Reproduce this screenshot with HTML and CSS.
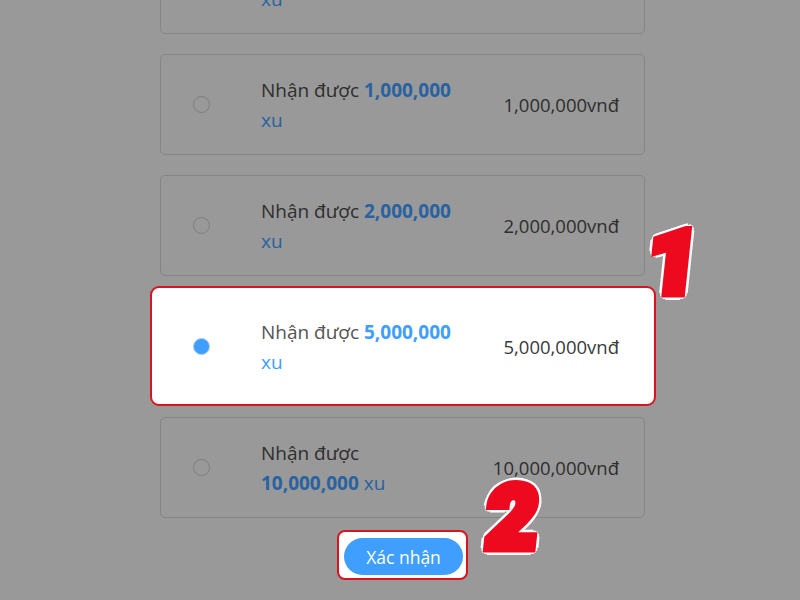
FILE: index.html
```html
<!DOCTYPE html>
<html lang="vi">
<head>
<meta charset="utf-8">
<title>Nạp xu</title>
<link rel="stylesheet" href="styles.css">
</head>
<body>
<div class="page">
  <ul class="list">
    <li class="card">
      <span class="radio"></span>
      <div class="label">Nhận được <b class="amt">500,000</b> <span class="unit">xu</span></div>
      <div class="price">500,000vnđ</div>
    </li>
    <li class="card">
      <span class="radio"></span>
      <div class="label">Nhận được <b class="amt">1,000,000</b> <span class="unit">xu</span></div>
      <div class="price">1,000,000vnđ</div>
    </li>
    <li class="card">
      <span class="radio"></span>
      <div class="label">Nhận được <b class="amt">2,000,000</b> <span class="unit">xu</span></div>
      <div class="price">2,000,000vnđ</div>
    </li>
    <li class="card card-active">
      <span class="radio radio-on"></span>
      <div class="label">Nhận được <b class="amt">5,000,000</b> <span class="unit">xu</span></div>
      <div class="price">5,000,000vnđ</div>
      <span class="mark mark-1">1</span>
    </li>
    <li class="card">
      <span class="radio"></span>
      <div class="label">Nhận được <b class="amt">10,000,000</b> <span class="unit">xu</span></div>
      <div class="price">10,000,000vnđ</div>
    </li>
  </ul>
  <div class="actions">
    <span class="highlight">
      <button class="confirm" type="button">Xác nhận</button>
    </span>
    <span class="mark mark-2">2</span>
  </div>
</div>
</body>
</html>
```

FILE: styles.css
```css
html, body {
  margin: 0;
  padding: 0;
}
body {
  background: #999999;
  font-family: "Open Sans", "Noto Sans", sans-serif;
  width: 800px;
  height: 600px;
  overflow: hidden;
}
.page {
  width: 485px;
  margin-left: 160px;
}
.list {
  list-style: none;
  margin: -67px 0 0 0;
  padding: 0;
  display: flex;
  flex-direction: column;
  gap: 20px;
}
.card {
  position: relative;
  box-sizing: border-box;
  height: 101px;
  border: 1px solid #858585;
  border-radius: 5px;
  display: flex;
  align-items: center;
  padding: 0 25px 0 32px;
}
.radio {
  box-sizing: border-box;
  width: 17px;
  height: 17px;
  border-radius: 50%;
  border: 1px solid #7d7d7d;
  flex: none;
}
.label {
  width: 198px;
  margin-left: 51px;
  font-size: 19px;
  line-height: 30px;
  color: #2e2e2e;
}
.amt {
  color: #2862a0;
  font-weight: 700;
}
.unit {
  color: #2862a0;
}
.price {
  margin-left: auto;
  font-size: 18.5px;
  color: #2e2e2e;
}
.card-active {
  background: #ffffff;
  border-color: #5ba7f2;
  z-index: 0;
}
.card-active::before {
  content: "";
  position: absolute;
  inset: -11px -12px -10px -11px;
  border: 2px solid #d8141e;
  border-radius: 9px;
  background: #ffffff;
  z-index: -1;
}
.card-active .label { color: #555555; }
.card-active .amt, .card-active .unit { color: #409eff; }
.card-active .price { color: #3a3a3a; }
.radio-on {
  background: #409eff;
  border-color: #a8cdf5;
}
.actions {
  position: relative;
  display: flex;
  justify-content: center;
  padding-top: 12px;
}
.highlight {
  display: flex;
  padding: 6px 3px 3px 5px;
  border: 2px solid #d8141e;
  border-radius: 8px;
  background: #ffffff;
}
.confirm {
  border: none;
  background: #409eff;
  color: #ffffff;
  font-family: "Open Sans", "Noto Sans", sans-serif;
  font-size: 17.5px;
  width: 119px;
  height: 37px;
  border-radius: 19px;
  padding: 0;
}
.mark {
  position: absolute;
  font-family: Roboto, "Liberation Sans", sans-serif;
  font-weight: 900;
  font-size: 88px;
  line-height: 1;
  color: #ee0a1e;
  transform: skewX(-6deg);
  -webkit-text-stroke: 9px #ee0a1e;
  text-shadow:
    7px 0 0 #fff, -7px 0 0 #fff, 0 7px 0 #fff, 0 -7px 0 #fff,
    5px 5px 0 #fff, -5px 5px 0 #fff, 5px -5px 0 #fff, -5px -5px 0 #fff,
    6px 3px 0 #fff, -6px 3px 0 #fff, 6px -3px 0 #fff, -6px -3px 0 #fff,
    3px 6px 0 #fff, -3px 6px 0 #fff, 3px -6px 0 #fff, -3px -6px 0 #fff;
}
.mark-1 {
  left: 487px;
  top: -78px;
}
.mark-2 {
  left: 327px;
  top: -44px;
}
```
